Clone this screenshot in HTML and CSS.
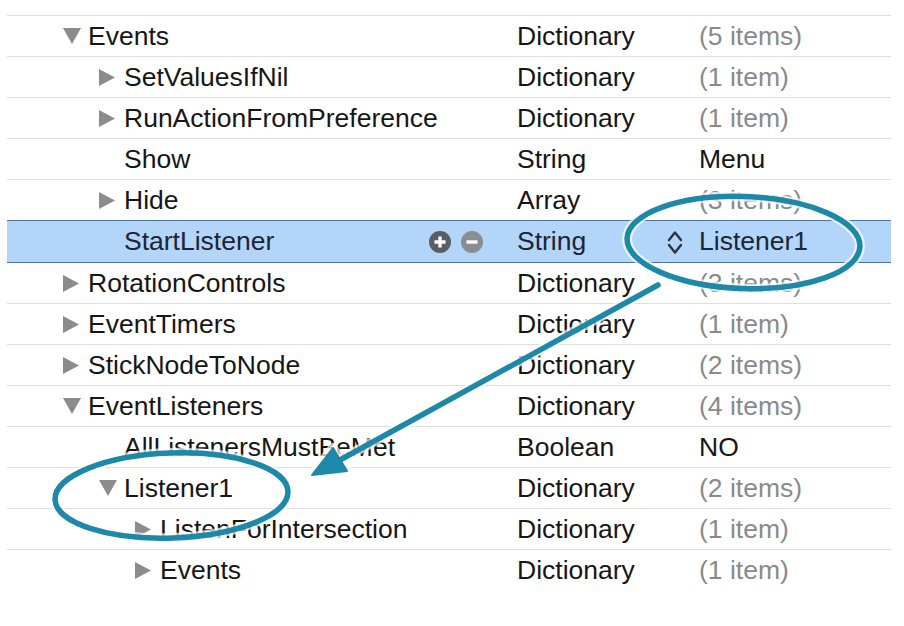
FILE: index.html
```html
<!DOCTYPE html>
<html>
<head>
<meta charset="utf-8">
<link rel="stylesheet" href="styles.css">
</head>
<body>
<div class="page">
  <div class="tree">
    <div class="row">
      <div class="key l1"><span class="disc"><svg width="18" height="16" viewBox="0 0 18 16"><path d="M0 0H18L9 16Z"/></svg></span>Events</div>
      <div class="type">Dictionary</div>
      <div class="val dim">(5 items)</div>
    </div>
    <div class="row">
      <div class="key l2"><span class="disc"><svg width="16" height="17" viewBox="0 0 16 17"><path d="M0 0L16 8.5L0 17Z"/></svg></span>SetValuesIfNil</div>
      <div class="type">Dictionary</div>
      <div class="val dim">(1 item)</div>
    </div>
    <div class="row">
      <div class="key l2"><span class="disc"><svg width="16" height="17" viewBox="0 0 16 17"><path d="M0 0L16 8.5L0 17Z"/></svg></span>RunActionFromPreference</div>
      <div class="type">Dictionary</div>
      <div class="val dim">(1 item)</div>
    </div>
    <div class="row">
      <div class="key l2"><span class="disc"></span>Show</div>
      <div class="type">String</div>
      <div class="val">Menu</div>
    </div>
    <div class="row">
      <div class="key l2"><span class="disc"><svg width="16" height="17" viewBox="0 0 16 17"><path d="M0 0L16 8.5L0 17Z"/></svg></span>Hide</div>
      <div class="type">Array</div>
      <div class="val dim">(3 items)</div>
    </div>
    <div class="row selected">
      <div class="key l2"><span class="disc"></span>StartListener
        <span class="btns">
          <svg class="btn" width="22" height="22" viewBox="0 0 22 22"><circle cx="11" cy="11" r="11" fill="#5a5e65"/><path d="M5.5 11H16.5M11 5.5V16.5" stroke="#fff" stroke-width="3.4"/></svg>
          <svg class="btn" width="22" height="22" viewBox="0 0 22 22"><circle cx="11" cy="11" r="11" fill="#8a8e94"/><path d="M5.5 11H16.5" stroke="#fff" stroke-width="3.4"/></svg>
        </span>
      </div>
      <div class="type">String
        <svg class="chev" width="16" height="32" viewBox="0 0 16 32"><path d="M2 14L8 6.5L14 14M2 19L8 26.5L14 19" fill="none" stroke="#2b3442" stroke-width="2.4" stroke-linecap="round" stroke-linejoin="round"/></svg>
      </div>
      <div class="val">Listener1</div>
    </div>
    <div class="row">
      <div class="key l1"><span class="disc"><svg width="16" height="17" viewBox="0 0 16 17"><path d="M0 0L16 8.5L0 17Z"/></svg></span>RotationControls</div>
      <div class="type">Dictionary</div>
      <div class="val dim">(3 items)</div>
    </div>
    <div class="row">
      <div class="key l1"><span class="disc"><svg width="16" height="17" viewBox="0 0 16 17"><path d="M0 0L16 8.5L0 17Z"/></svg></span>EventTimers</div>
      <div class="type">Dictionary</div>
      <div class="val dim">(1 item)</div>
    </div>
    <div class="row">
      <div class="key l1"><span class="disc"><svg width="16" height="17" viewBox="0 0 16 17"><path d="M0 0L16 8.5L0 17Z"/></svg></span>StickNodeToNode</div>
      <div class="type">Dictionary</div>
      <div class="val dim">(2 items)</div>
    </div>
    <div class="row">
      <div class="key l1"><span class="disc"><svg width="18" height="16" viewBox="0 0 18 16"><path d="M0 0H18L9 16Z"/></svg></span>EventListeners</div>
      <div class="type">Dictionary</div>
      <div class="val dim">(4 items)</div>
    </div>
    <div class="row">
      <div class="key l2"><span class="disc"></span>AllListenersMustBeMet</div>
      <div class="type">Boolean</div>
      <div class="val">NO</div>
    </div>
    <div class="row">
      <div class="key l2"><span class="disc"><svg width="18" height="16" viewBox="0 0 18 16"><path d="M0 0H18L9 16Z"/></svg></span>Listener1</div>
      <div class="type">Dictionary</div>
      <div class="val dim">(2 items)</div>
    </div>
    <div class="row">
      <div class="key l3"><span class="disc"><svg width="16" height="17" viewBox="0 0 16 17"><path d="M0 0L16 8.5L0 17Z"/></svg></span>ListenForIntersection</div>
      <div class="type">Dictionary</div>
      <div class="val dim">(1 item)</div>
    </div>
    <div class="row last">
      <div class="key l3"><span class="disc"><svg width="16" height="17" viewBox="0 0 16 17"><path d="M0 0L16 8.5L0 17Z"/></svg></span>Events</div>
      <div class="type">Dictionary</div>
      <div class="val dim">(1 item)</div>
    </div>
  </div>

  <svg class="annot" width="904" height="626" viewBox="0 0 904 626">
    <g fill="none" stroke="#ffffff" stroke-width="10" stroke-opacity="0.7" stroke-linecap="round">
      <ellipse cx="743.5" cy="242.5" rx="116.5" ry="46" transform="rotate(2 743.5 242.5)"/>
      <ellipse cx="171.5" cy="495.5" rx="116.5" ry="42.5" transform="rotate(-2 171.5 495.5)"/>
      <line x1="658" y1="285" x2="340" y2="460"/>
      <polygon points="312,475 333,448 347,471" stroke-linejoin="round"/>
    </g>
    <g fill="none" stroke="#1d88a8" stroke-width="5.5" stroke-linecap="round">
      <ellipse cx="743.5" cy="242.5" rx="116.5" ry="46" transform="rotate(2 743.5 242.5)"/>
      <ellipse cx="171.5" cy="495.5" rx="116.5" ry="42.5" transform="rotate(-2 171.5 495.5)"/>
      <line x1="658" y1="285" x2="340" y2="460"/>
    </g>
    <polygon points="312,475 333,448 347,471" fill="#1d88a8" stroke="#1d88a8" stroke-width="2" stroke-linejoin="round"/>
  </svg>
</div>
</body>
</html>
```

FILE: styles.css
```css
* { box-sizing: content-box; }

body {
  margin: 0;
  background: #ffffff;
  font-family: "Liberation Sans", Arial, sans-serif;
}

.page {
  position: relative;
  width: 904px;
  height: 626px;
  overflow: hidden;
  background: #ffffff;
}

.tree {
  margin: 15px 0 0 7px;
  width: 884px;
  border-top: 1px solid #dedede;
  font-size: 26.5px;
  color: #161616;
}

.row {
  display: grid;
  grid-template-columns: 510px 182px 1fr;
  height: 40px;
  border-bottom: 1px solid #dedede;
  align-items: center;
  white-space: nowrap;
}

.row.last {
  border-bottom-color: transparent;
}

.row.selected {
  position: relative;
  margin-top: -1px;
  height: 41px;
  background: #b3d5fa;
  border-top: 1px solid #4d7399;
  border-bottom: 1px solid #4d7399;
  color: #1b2535;
}

.key {
  display: flex;
  align-items: center;
  height: 100%;
}

.l1 { padding-left: 56px; }
.l2 { padding-left: 92px; }
.l3 { padding-left: 128px; }

.disc {
  display: inline-flex;
  align-items: center;
  width: 25px;
  flex: none;
}

.disc svg { fill: #8c8c8c; display: block; }

.btns {
  margin-left: auto;
  margin-right: 34px;
  display: flex;
  gap: 10px;
  align-items: center;
}

.btn { display: block; }

.type {
  display: flex;
  align-items: center;
  justify-content: space-between;
  padding-right: 16px;
  height: 100%;
}

.chev { display: block; }

.dim { color: #8a8a8a; }

.annot {
  position: absolute;
  left: 0;
  top: 0;
  pointer-events: none;
}
```
